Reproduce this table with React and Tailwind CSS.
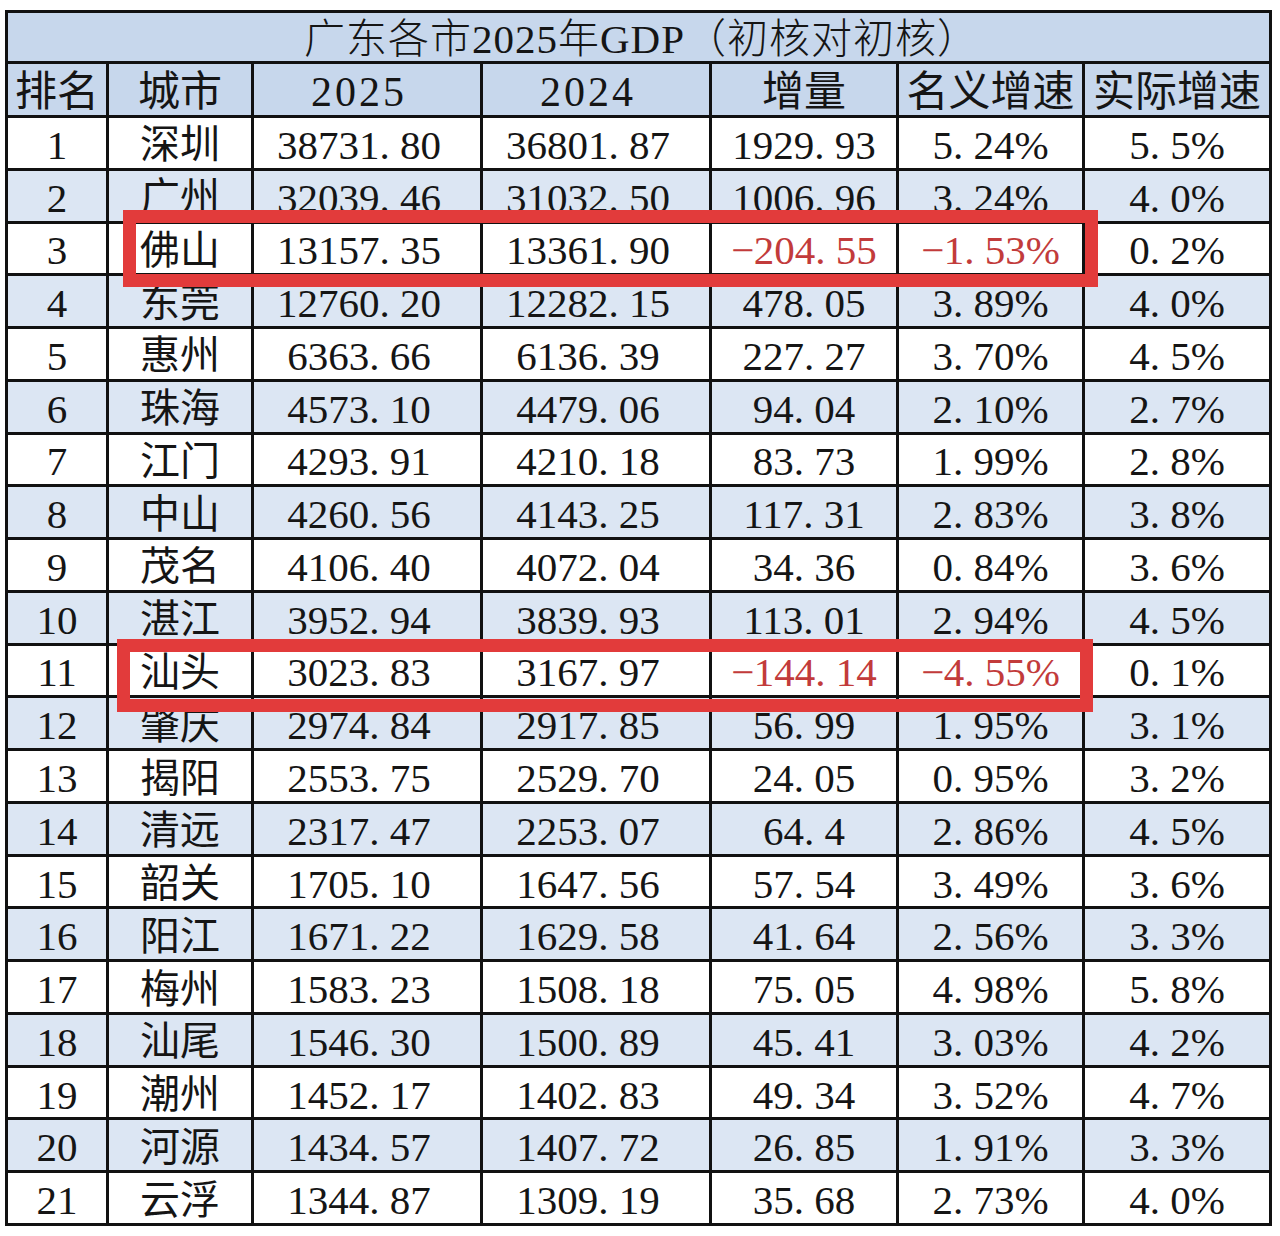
import React from "react";

const rows = [
  ["1", "深圳", "38731.80", "36801.87", "1929.93", "5.24%", "5.5%"],
  ["2", "广州", "32039.46", "31032.50", "1006.96", "3.24%", "4.0%"],
  ["3", "佛山", "13157.35", "13361.90", "-204.55", "-1.53%", "0.2%"],
  ["4", "东莞", "12760.20", "12282.15", "478.05", "3.89%", "4.0%"],
  ["5", "惠州", "6363.66", "6136.39", "227.27", "3.70%", "4.5%"],
  ["6", "珠海", "4573.10", "4479.06", "94.04", "2.10%", "2.7%"],
  ["7", "江门", "4293.91", "4210.18", "83.73", "1.99%", "2.8%"],
  ["8", "中山", "4260.56", "4143.25", "117.31", "2.83%", "3.8%"],
  ["9", "茂名", "4106.40", "4072.04", "34.36", "0.84%", "3.6%"],
  ["10", "湛江", "3952.94", "3839.93", "113.01", "2.94%", "4.5%"],
  ["11", "汕头", "3023.83", "3167.97", "-144.14", "-4.55%", "0.1%"],
  ["12", "肇庆", "2974.84", "2917.85", "56.99", "1.95%", "3.1%"],
  ["13", "揭阳", "2553.75", "2529.70", "24.05", "0.95%", "3.2%"],
  ["14", "清远", "2317.47", "2253.07", "64.4", "2.86%", "4.5%"],
  ["15", "韶关", "1705.10", "1647.56", "57.54", "3.49%", "3.6%"],
  ["16", "阳江", "1671.22", "1629.58", "41.64", "2.56%", "3.3%"],
  ["17", "梅州", "1583.23", "1508.18", "75.05", "4.98%", "5.8%"],
  ["18", "汕尾", "1546.30", "1500.89", "45.41", "3.03%", "4.2%"],
  ["19", "潮州", "1452.17", "1402.83", "49.34", "3.52%", "4.7%"],
  ["20", "河源", "1434.57", "1407.72", "26.85", "1.91%", "3.3%"],
  ["21", "云浮", "1344.87", "1309.19", "35.68", "2.73%", "4.0%"],
];

const headers = ["排名", "城市", "2025", "2024", "增量", "名义增速", "实际增速"];

// SimSun-style numbers: the dot takes a full half-width cell
const Num = ({ value }) => {
  const neg = value.startsWith("-");
  const body = neg ? value.slice(1) : value;
  const [a, b] = body.split(".");
  return (
    <span className="whitespace-nowrap">
      {neg && <span className="inline-block w-[0.55em] text-center">−</span>}
      {a}
      {b !== undefined && (
        <>
          <span className="inline-block w-[0.5em] text-left">.</span>
          {b}
        </>
      )}
    </span>
  );
};

const App = () => {
  return (
    <div className="relative w-[1280px] h-[1236px] bg-white pt-[10px] pl-[5px] font-['Liberation_Serif','Noto_Sans_CJK_SC',serif]">
      <div className="grid w-[1267px] h-[1216px] bg-[#111] p-[3px] gap-[3px] grid-cols-[98px_142px_226px_226px_184px_183px_184px] grid-rows-[48px_51px_repeat(21,minmax(0,1fr))] text-[#151515]">
        <div className="col-span-7 bg-[#c7d7ec] flex items-center justify-center pt-[4px] pl-[6px] text-[41px] leading-none tracking-[1px] font-light">
          广东各市2025年GDP（初核对初核）
        </div>

        {headers.map((h, i) => (
          <div
            key={h}
            className={`bg-[#c7d7ec] flex items-center justify-center pt-[4px] text-[42px] leading-none ${
              i === 2 || i === 3 ? "pr-4 tracking-[3px]" : ""
            }`}
          >
            {h}
          </div>
        ))}

        {rows.map((r, ri) => {
          const bg = ri % 2 === 1 ? "bg-[#dce6f3]" : "bg-white";
          return r.map((cell, ci) => {
            const red = cell.startsWith("-");
            return (
              <div
                key={ri + "-" + ci}
                className={`${bg} flex items-center justify-center pt-[5px] leading-none ${
                  ci === 1 ? "text-[40px]" : "text-[41px]"
                } ${ci === 2 || ci === 3 ? "pr-4" : ""} ${red ? "text-[#c23b3b]" : ""}`}
              >
                {ci === 1 ? cell : <Num value={cell} />}
              </div>
            );
          });
        })}
      </div>

      {/* red highlight frames */}
      <div className="absolute left-[123px] top-[210px] w-[975px] h-[77px] border-[13px] border-[#e23b3b] pointer-events-none" />
      <div className="absolute left-[117px] top-[639px] w-[976px] h-[73px] border-[13px] border-[#e23b3b] pointer-events-none" />
    </div>
  );
};

export default App;
